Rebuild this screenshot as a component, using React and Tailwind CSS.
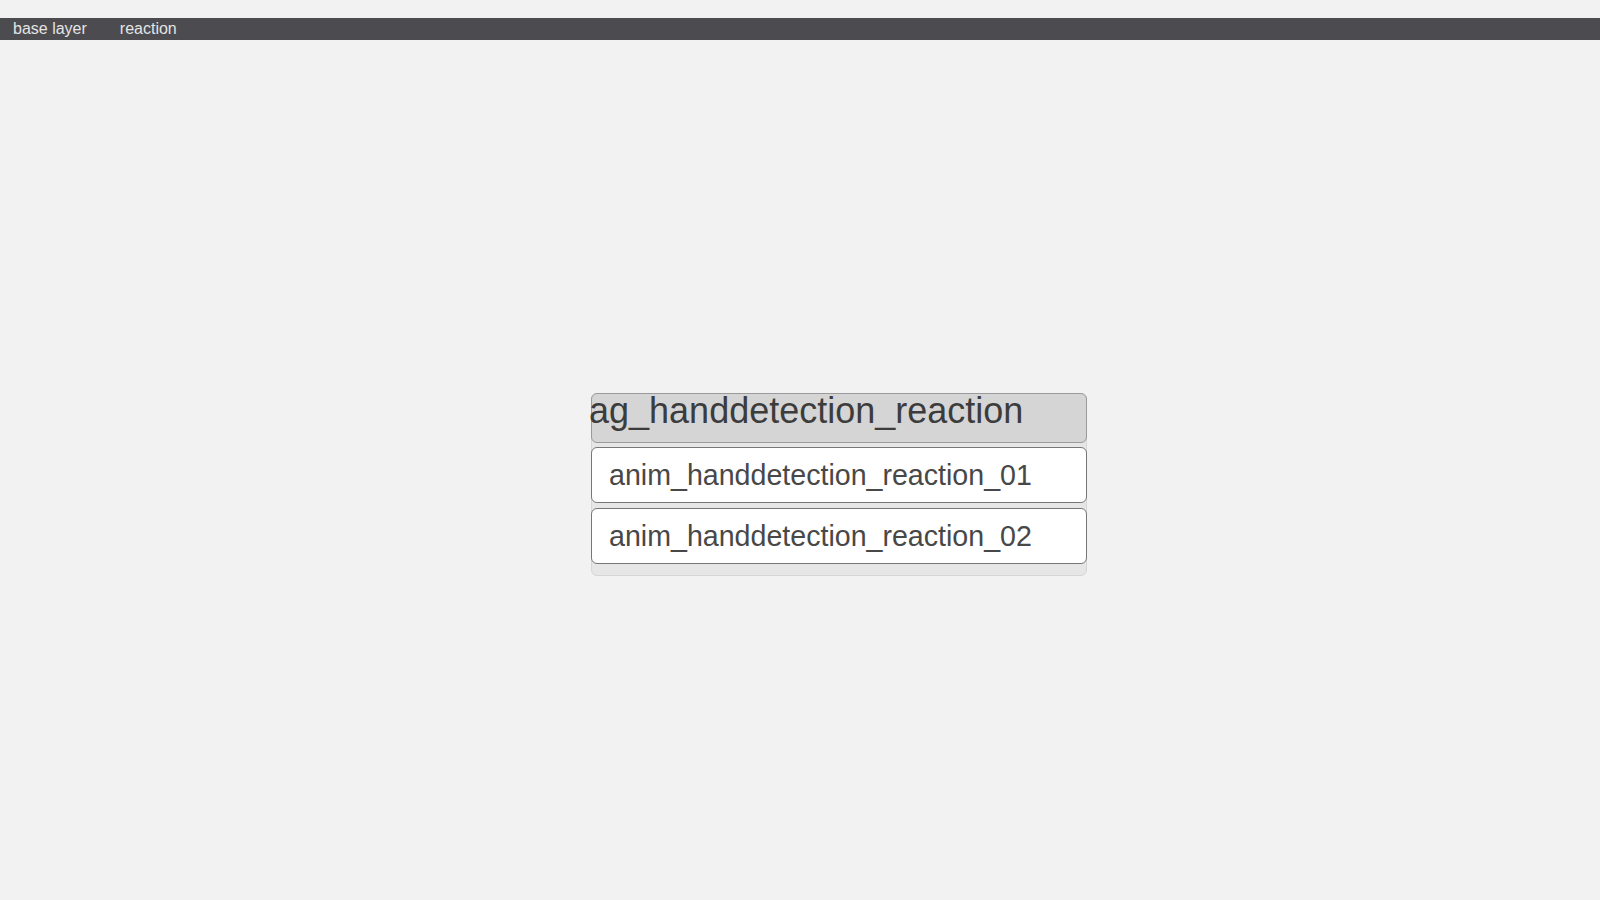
import React from "react";

const clips = ["anim_handdetection_reaction_01", "anim_handdetection_reaction_02"];

export default function App() {
  return (
    <div className="min-h-[900px] w-full bg-[#f2f2f2] font-['Liberation_Sans',Arial,sans-serif] flex flex-col">
      <div className="h-[18px]" />
      <div className="h-[22px] bg-[#4b4b50] flex items-center text-[16px] text-[#e4e4e4]">
        <span className="ml-[13px]">base layer</span>
        <span className="ml-[33px]">reaction</span>
      </div>

      {/* canvas */}
      <div className="relative flex-1">
        <div className="absolute left-[591px] top-[353px] w-[496px] rounded-[6px] bg-[#e6e6e6] border border-[#d6d6d6] pb-[11px] flex flex-col gap-[5px]">
          <div className="h-[50px] -m-px rounded-[6px] bg-[#d5d5d5] border-[1.5px] border-[#9a9a9a] flex items-start">
            <span className="text-[36px] leading-[34px] mt-0 -ml-[3px] text-[#3c3c3c] whitespace-nowrap">
              ag_handdetection_reaction
            </span>
          </div>
          {clips.map((c) => (
            <div
              key={c}
              className="h-[56px] -mx-px rounded-[6px] bg-white border-[1.5px] border-[#777777] flex items-center pl-[17px]"
            >
              <span className="text-[28.6px] text-[#484848] whitespace-nowrap">{c}</span>
            </div>
          ))}
        </div>
      </div>
    </div>
  );
}
